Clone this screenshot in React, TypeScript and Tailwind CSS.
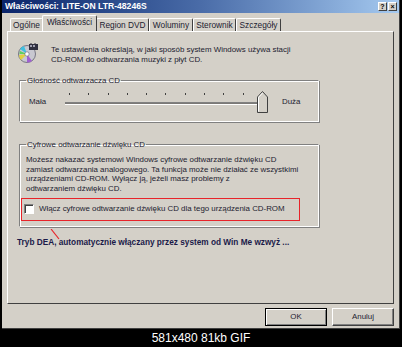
export default function App() {
  const tabs = [
    { label: "Ogólne", w: "w-[33px]" },
    { label: "Właściwości", w: "w-[55px]", active: true },
    { label: "Region DVD", w: "w-[53px]" },
    { label: "Woluminy", w: "w-[44px]" },
    { label: "Sterownik", w: "w-[43px]" },
    { label: "Szczegóły", w: "w-[45px]" },
  ];
  const ticks = Array.from({ length: 11 });

  return (
    <div className="w-[402px] h-[347px] bg-black flex flex-col font-['Liberation_Sans',Arial,sans-serif] text-[#1c1c30] overflow-hidden">
      {/* dialog window */}
      <div className="mx-[2px] h-[329px] bg-[#d4d0c8] flex flex-col border-r border-b border-[#404040]">
        {/* title bar */}
        <div className="h-[13px] flex items-center justify-between pl-[3px] pr-[2px] bg-gradient-to-r from-[#0a246a] via-[#4a6ca8] to-[#a6caf0]">
          <span className="text-white font-bold text-[8.6px] leading-none">Właściwości: LITE-ON LTR-48246S</span>
          <div className="flex">
            <div className="w-[9px] h-[9px] bg-[#d4d0c8] border-t border-l border-white border-r border-b border-r-[#404040] border-b-[#404040] text-[7px] font-bold leading-[7px] text-center text-black">?</div>
            <div className="w-[9px] h-[9px] ml-[1px] bg-[#d4d0c8] border-t border-l border-white border-r border-b border-r-[#404040] border-b-[#404040] text-[7px] font-bold leading-[7px] text-center text-black">×</div>
          </div>
        </div>

        {/* tabs */}
        <div className="flex items-end h-[18px] pl-[8px]">
          {tabs.map((t) =>
            t.active ? (
              <div
                key={t.label}
                className={`${t.w} -mx-[1px] h-[16px] relative z-10 bg-[#d4d0c8] border-t border-l border-white border-r border-r-[#404040] rounded-t-[2px] text-[8.3px] flex items-start pt-[2px] justify-center leading-none`}
              >
                {t.label}
              </div>
            ) : (
              <div
                key={t.label}
                className={`${t.w} h-[13px] bg-[#d4d0c8] border-t border-l border-white border-r border-r-[#404040] rounded-t-[2px] text-[8.3px] flex items-center justify-center leading-none`}
              >
                {t.label}
              </div>
            )
          )}
        </div>

        {/* tab panel */}
        <div className="mx-[5px] h-[273px] border-t border-l border-white border-r border-b border-r-[#404040] border-b-[#404040] flex flex-col pl-[10px] pt-[10px]">
          {/* intro */}
          <div className="flex items-start">
            <svg width="21" height="21" viewBox="0 0 21 21" className="shrink-0">
              <circle cx="9" cy="12" r="8.5" fill="#c8c8d0" stroke="#606070" strokeWidth="0.8" />
              <path d="M9 12 L2 7 A8.5 8.5 0 0 1 6 4 Z" fill="#40c0e0" />
              <path d="M9 12 L3 18 A8.5 8.5 0 0 1 1 13 Z" fill="#e0d040" />
              <path d="M9 12 L14 19 A8.5 8.5 0 0 1 9 20.5 Z" fill="#a060d0" />
              <path d="M9 12 L2 9 A8.5 8.5 0 0 0 1.5 12 Z" fill="#60d060" />
              <circle cx="9" cy="12" r="2.2" fill="#ffffff" stroke="#606070" strokeWidth="0.6" />
              <rect x="11" y="2" width="9" height="6" fill="#303040" />
              <rect x="12" y="3" width="2" height="2" fill="#a0a0b0" />
              <rect x="15" y="3" width="2" height="2" fill="#a0a0b0" />
              <path d="M13 1 v2 M17 1 v2" stroke="#303040" strokeWidth="1" />
            </svg>
            <p className="ml-[12px] mt-[3px] text-[7.9px] leading-[10px]">
              Te ustawienia określają, w jaki sposób system Windows używa stacji
              <br />
              CD-ROM do odtwarzania muzyki z płyt CD.
            </p>
          </div>

          {/* volume group */}
          <fieldset className="ml-[1px] mt-[11px] w-[300px] h-[46px] border-t border-l border-[#808080] border-r border-b border-r-white border-b-white shadow-[inset_1px_1px_0_#ffffff,1px_1px_0_#808080]">
            <legend className="ml-[6px] px-[1px] text-[7.9px] leading-[9px]">Głośność odtwarzacza CD</legend>
            <div className="flex items-center mt-[5px]">
              <span className="ml-[9px] w-[33px] text-[7.9px]">Mała</span>
              <div className="relative w-[208px] h-[24px]">
                <div className="flex justify-between px-[7px] pt-[3px]">
                  {ticks.map((_, i) => (
                    <span key={i} className="w-[1px] h-[2px] bg-[#404040]" />
                  ))}
                </div>
                <div className="ml-[3px] mr-[6px] mt-[7px] h-[3px] border-t border-[#808080] border-b border-b-white bg-[#404040]/60" />
                <svg width="11" height="22" viewBox="0 0 11 22" className="absolute left-[195px] top-[1px]">
                  <path d="M0.5 21.5 V6 L5.5 0.5 L10.5 6 V21.5 Z" fill="#d4d0c8" stroke="#404040" strokeWidth="1" />
                  <path d="M1.5 20.5 V6.3 L5.5 2" fill="none" stroke="#ffffff" strokeWidth="1" />
                </svg>
              </div>
              <span className="ml-[12px] text-[7.9px]">Duża</span>
            </div>
          </fieldset>

          {/* digital playback group */}
          <fieldset className="ml-[1px] mt-[18px] w-[300px] h-[87px] border-t border-l border-[#808080] border-r border-b border-r-white border-b-white shadow-[inset_1px_1px_0_#ffffff,1px_1px_0_#808080] relative">
            <legend className="ml-[6px] px-[1px] text-[7.9px] leading-[9px]">Cyfrowe odtwarzanie dźwięku CD</legend>
            <p className="ml-[6px] mt-[6px] text-[7.9px] leading-[9.7px]">
              Możesz nakazać systemowi Windows cyfrowe odtwarzanie dźwięku CD
              <br />
              zamiast odtwarzania analogowego. Ta funkcja może nie działać ze wszystkimi
              <br />
              urządzeniami CD-ROM. Wyłącz ją, jeżeli masz problemy z
              <br />
              odtwarzaniem dźwięku CD.
            </p>
            <div className="ml-[1px] mt-[4px] w-[279px] h-[23px] border-[1.5px] border-[#e8242a] flex items-center pl-[2px]">
              <span className="w-[10px] h-[10px] bg-white border-t border-l border-[#808080] border-r border-b border-r-white border-b-white shadow-[inset_1px_1px_0_#404040]" />
              <span className="ml-[5px] text-[7.9px]">Włącz cyfrowe odtwarzanie dźwięku CD dla tego urządzenia CD-ROM</span>
            </div>
            <svg width="12" height="12" viewBox="0 0 12 12" className="absolute left-[30px] top-[80px]">
              <path d="M1 0 L9 10" stroke="#e8242a" strokeWidth="1.2" />
            </svg>
          </fieldset>

          <p className="ml-[-1px] mt-[10px] text-[8.25px] font-bold text-[#1a1a48]">
            Tryb DEA, automatycznie włączany przez system od Win Me wzwyż ...
          </p>
        </div>

        {/* buttons */}
        <div className="flex justify-end gap-[5px] pr-[5px] mt-[4px]">
          <button className="w-[62px] h-[18px] border border-black bg-[#d4d0c8] shadow-[inset_1px_1px_0_#ffffff,inset_-1px_-1px_0_#808080] text-[7.9px] text-[#1c1c30]">
            OK
          </button>
          <button className="w-[62px] h-[18px] border-t border-l border-white border-r border-b border-r-[#404040] border-b-[#404040] bg-[#d4d0c8] shadow-[inset_-1px_-1px_0_#808080] text-[7.9px] text-[#1c1c30]">
            Anuluj
          </button>
        </div>
      </div>

      {/* caption bar */}
      <div className="flex-1 flex items-center justify-center text-white text-[12px]">
        581x480 81kb GIF
      </div>
    </div>
  );
}
